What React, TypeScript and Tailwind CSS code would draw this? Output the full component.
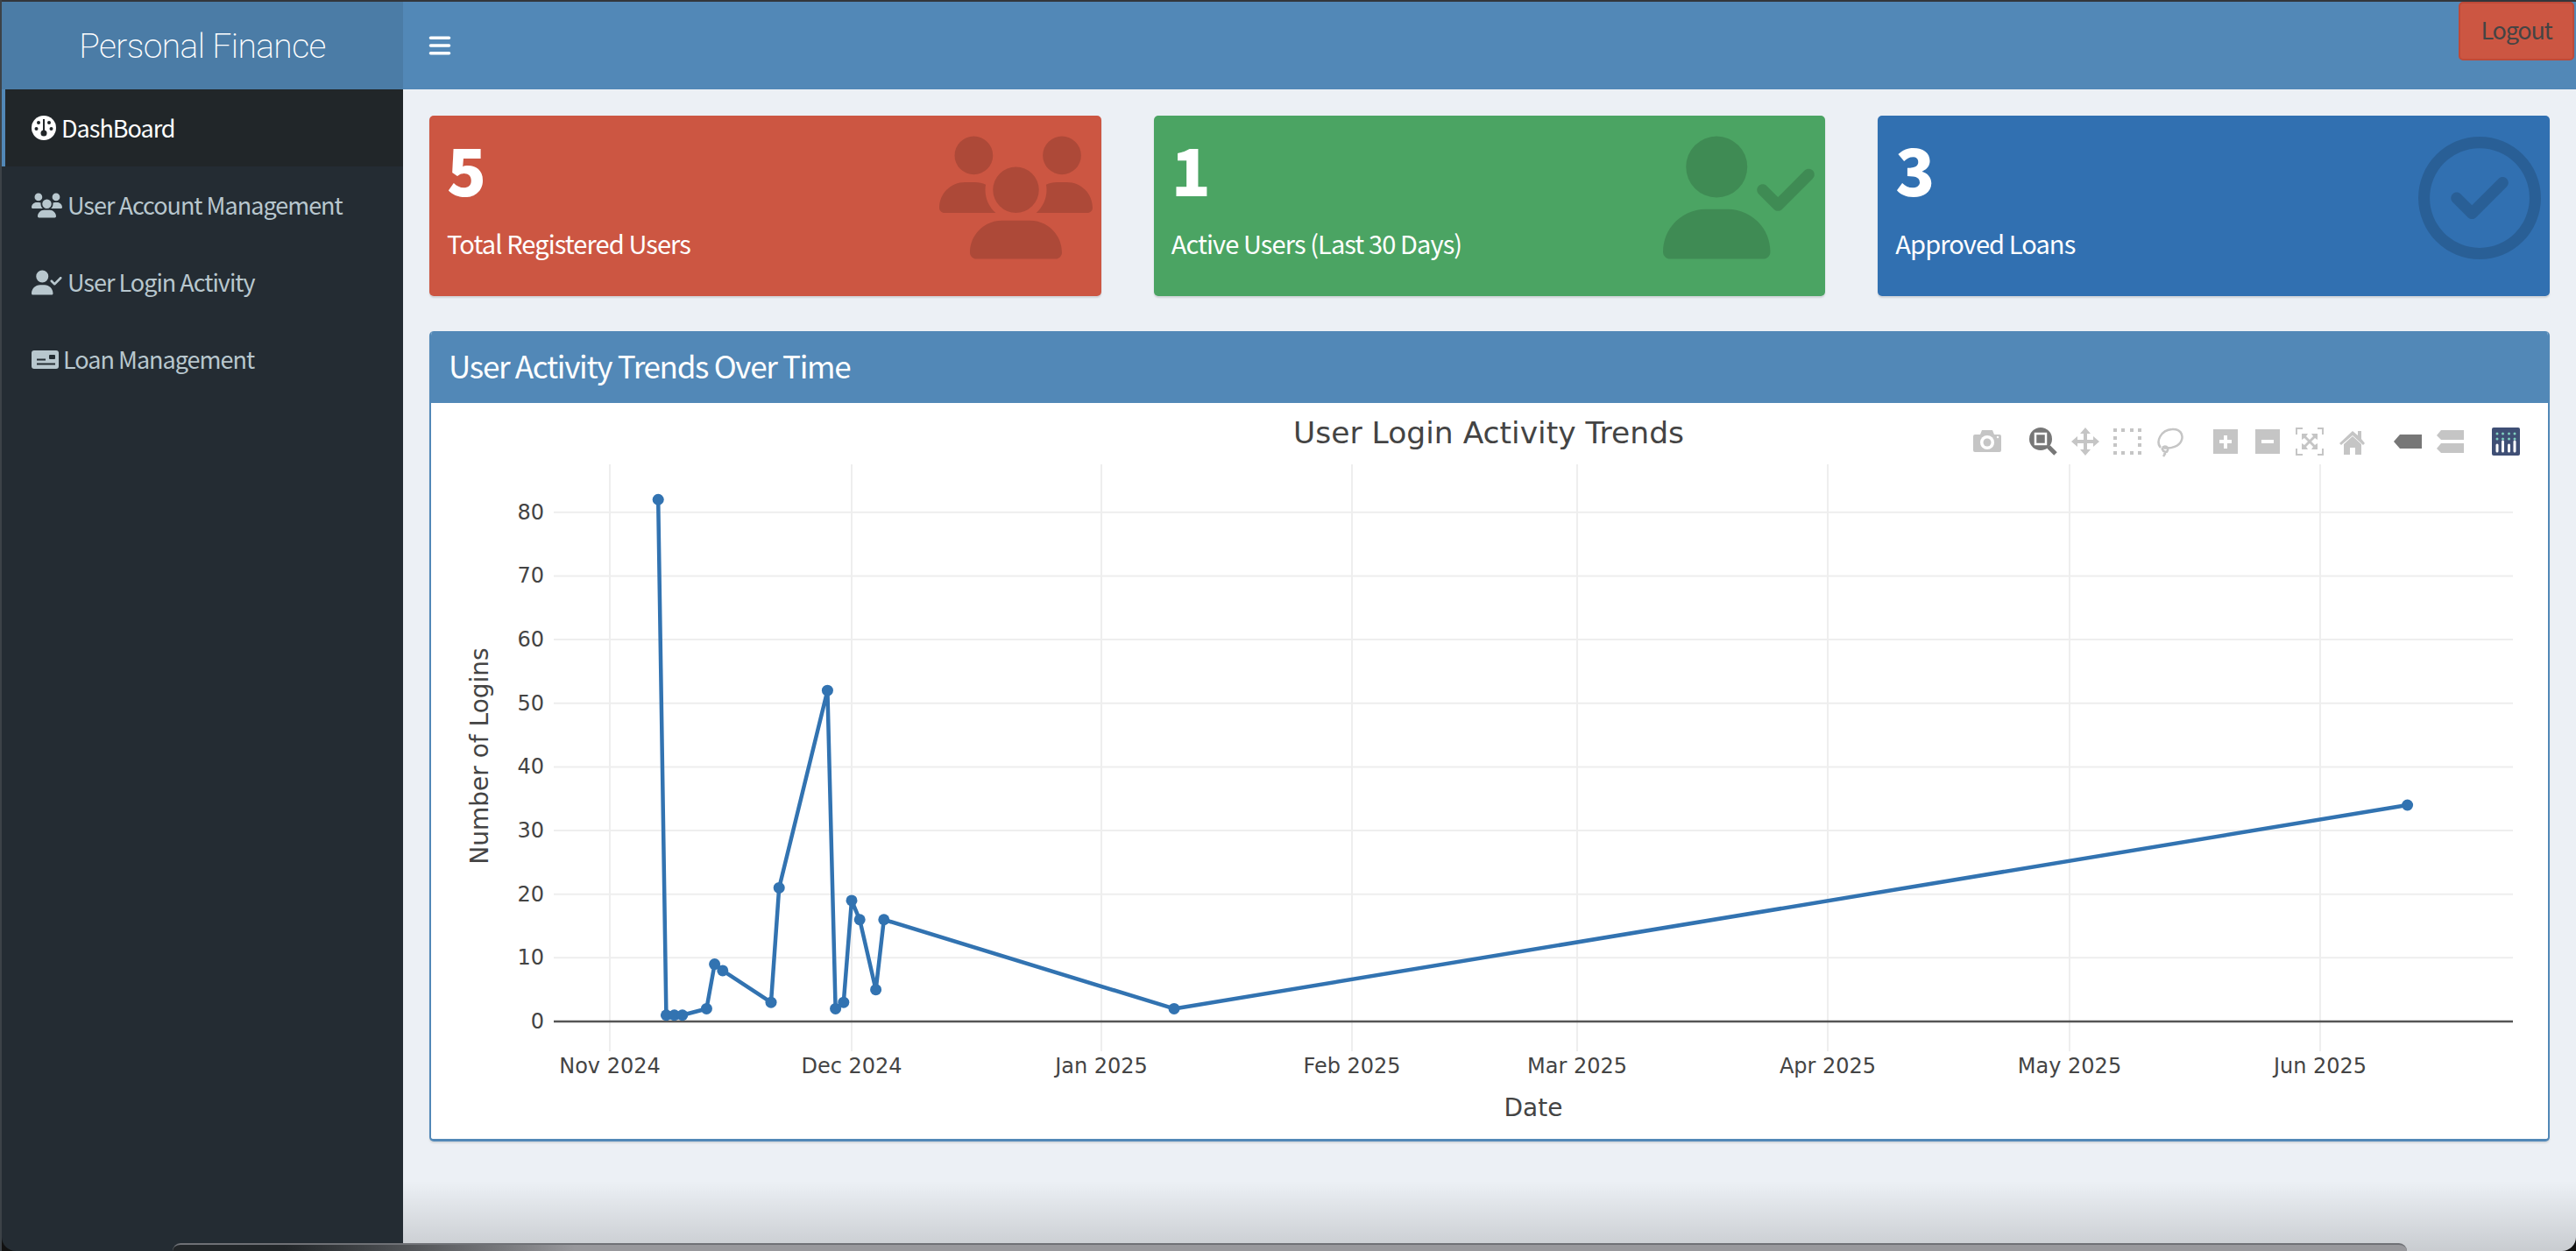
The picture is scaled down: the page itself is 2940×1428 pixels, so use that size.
import { FaBars, FaUsers, FaUserCheck, FaRegCircleCheck } from 'react-icons/fa6';

const sans = '"Noto Sans CJK SC", "Source Sans Pro", sans-serif';
const chartFont = '"DejaVu Sans", Verdana, sans-serif';

// Pixel positions of the month gridlines and the day-to-x scale
const monthTicks = [
  { x: 696, label: 'Nov 2024' },
  { x: 972, label: 'Dec 2024' },
  { x: 1257, label: 'Jan 2025' },
  { x: 1543, label: 'Feb 2025' },
  { x: 1800, label: 'Mar 2025' },
  { x: 2086, label: 'Apr 2025' },
  { x: 2362, label: 'May 2025' },
  { x: 2648, label: 'Jun 2025' },
];
const yTicks = [0, 10, 20, 30, 40, 50, 60, 70, 80];
const yPos = (v: number) => 1166 - 7.265 * v;

// [days since Nov 1 2024, logins]
const points: [number, number][] = [
  [6, 82], [7, 1], [8, 1], [9, 1], [12, 2], [13, 9], [14, 8], [20, 3], [21, 21], [27, 52],
  [28, 2], [29, 3], [30, 19], [31, 16], [33, 5], [34, 16], [70, 2], [223, 34],
];
const xPos = (d: number) => 696 + 9.2 * d;

function DashIcon() {
  return (
    <svg width="28" height="28" viewBox="0 0 28 28" className="shrink-0">
      <circle cx="14" cy="14" r="14" fill="#fff" />
      <g fill="#212629">
        <rect x="13" y="4" width="2" height="14" />
        <circle cx="14" cy="20" r="3.5" />
        <circle cx="5.5" cy="15" r="2" />
        <circle cx="8" cy="8" r="2" />
        <circle cx="20" cy="8" r="2" />
        <circle cx="22.5" cy="15" r="2" />
      </g>
    </svg>
  );
}

function LoanIcon() {
  return (
    <svg width="31" height="21" viewBox="0 0 31 21" className="shrink-0">
      <rect width="31" height="21" rx="3" fill="#b8c7ce" />
      <g fill="#242d33">
        <rect x="6" y="9.5" width="10" height="2" />
        <rect x="6" y="14.5" width="21" height="2" />
        <rect x="20" y="5" width="7" height="5" rx="1" />
      </g>
    </svg>
  );
}

function Modebar() {
  const on = '#c5c5c5';
  const dark = '#777777';
  return (
    <g>
      {/* camera */}
      <path d="M2254 496h6l2-5h12l2 5h6a2 2 0 0 1 2 2v16a2 2 0 0 1-2 2h-28a2 2 0 0 1-2-2v-16a2 2 0 0 1 2-2z" fill={on} />
      <circle cx="2268" cy="505" r="8" fill="#fff" />
      <circle cx="2268" cy="505" r="4.5" fill={on} />
      <circle cx="2280" cy="499" r="1.2" fill="#fff" />
      {/* zoom */}
      <circle cx="2329" cy="501" r="13" fill={dark} />
      <line x1="2338" y1="510" x2="2346" y2="518" stroke={dark} strokeWidth="5" />
      <rect x="2323" y="495" width="12" height="12" fill={dark} stroke="#fff" strokeWidth="2.5" />
      {/* pan */}
      <path d="M2380 488l6 7h-4v7h7v-4l7 6-7 6v-4h-7v7h4l-6 7-6-7h4v-7h-7v4l-7-6 7-6v4h7v-7h-4z" fill={on} />
      {/* box select */}
      <g fill={on}>
        {[2412, 2421, 2431, 2440].map((x) => (
          <g key={x}>
            <rect x={x} y="489" width="4" height="4" />
            <rect x={x} y="515" width="4" height="4" />
          </g>
        ))}
        <rect x="2412" y="498" width="4" height="4" />
        <rect x="2412" y="506" width="4" height="4" />
        <rect x="2440" y="498" width="4" height="4" />
        <rect x="2440" y="506" width="4" height="4" />
      </g>
      {/* lasso */}
      <g fill="none" stroke={on} strokeWidth="2.5">
        <path d="M2466 511c-6-7 0-20 13-21 9-1 13 6 11 12-2 7-12 11-22 9" />
        <path d="M2468 511c3-3 7-1 6 3-1 3-5 2-6-1-1-2 0 0 3 5l-2 3" />
      </g>
      {/* zoom in / out */}
      <rect x="2526" y="490" width="28" height="28" fill={on} />
      <path d="M2538 497h4v5h5v4h-5v6h-4v-6h-5v-4h5z" fill="#fff" />
      <rect x="2574" y="490" width="28" height="28" fill={on} />
      <rect x="2581" y="502" width="14" height="4" fill="#fff" />
      {/* autoscale */}
      <g fill="none" stroke={on} strokeWidth="2">
        <path d="M2621 496v-7h7M2645 489h6v7M2651 512v7h-6M2628 519h-7v-7" />
      </g>
      <path d="M2627 495h7l-2 3 4 4 4-4-2-3h7v7l-3-2-4 4 4 4 3-2v7h-7l2-3-4-4-4 4 2 3h-7v-7l3 2 4-4-4-4-3 2z" fill={on} />
      {/* home */}
      <path d="M2670 506l15-14 6 5v-5h4v9l4 5-2 2-12-11-13 11z" fill={on} />
      <path d="M2675 507l10-9 10 9v12h-7v-8h-6v8h-7z" fill={on} />
      {/* spike lines */}
      <path d="M2732 504l7-8h25v16h-25z" fill={dark} />
      <path d="M2786 491h26v11h-26l-5-5z" fill={on} />
      <path d="M2786 506h26v11h-26l-5-5z" fill={on} />
      {/* plotly logo */}
      <rect x="2844" y="488" width="32" height="32" rx="2" fill="#3f4f75" />
      <g fill="#80cfbe">
        {[2850, 2856.5, 2863.5, 2870].map((x) => (
          <g key={x}>
            <circle cx={x} cy="495" r="1.5" />
            <circle cx={x} cy="501" r="1.5" />
          </g>
        ))}
      </g>
      <g stroke="#fff" strokeWidth="3" strokeLinecap="round">
        <line x1="2850" y1="508" x2="2850" y2="515" />
        <line x1="2856.5" y1="504" x2="2856.5" y2="515" />
        <line x1="2863.5" y1="508" x2="2863.5" y2="515" />
        <line x1="2870" y1="504" x2="2870" y2="515" />
      </g>
    </g>
  );
}

function LoginChart() {
  const line = points.map(([d, v]) => `${xPos(d)},${yPos(v)}`).join(' ');
  return (
    <svg
      viewBox="492 460 2415 840"
      width="2415"
      height="840"
      className="block"
      style={{ fontFamily: chartFont }}
    >
      <text x="1699" y="506" textAnchor="middle" fontSize="34.5" fill="#444">User Login Activity Trends</text>
      <Modebar />
      {monthTicks.map((t) => (
        <g key={t.label}>
          <line x1={t.x} y1="530" x2={t.x} y2="1200" stroke="#eeeeee" strokeWidth="2" />
          <text x={t.x} y="1225" textAnchor="middle" fontSize="24" fill="#444">{t.label}</text>
        </g>
      ))}
      {yTicks.map((v) => (
        <g key={v}>
          {v > 0 && <line x1="632" y1={yPos(v)} x2="2868" y2={yPos(v)} stroke="#eeeeee" strokeWidth="2" />}
          <text x="621" y={yPos(v) + 8} textAnchor="end" fontSize="24" fill="#444">{v}</text>
        </g>
      ))}
      <line x1="632" y1="1166" x2="2868" y2="1166" stroke="#555" strokeWidth="2.5" />
      <polyline points={line} fill="none" stroke="#3273b1" strokeWidth="4.5" strokeLinejoin="round" />
      {points.map(([d, v]) => (
        <circle key={d} cx={xPos(d)} cy={yPos(v)} r="6.5" fill="#3273b1" />
      ))}
      <text x="1750" y="1274" textAnchor="middle" fontSize="28" fill="#444">Date</text>
      <text transform="translate(557 863) rotate(-90)" textAnchor="middle" fontSize="28" fill="#444">Number of Logins</text>
    </svg>
  );
}

function StatBox({ value, label, color, iconTop, icon }: { value: string; label: string; color: string; iconTop: string; icon: React.ReactNode }) {
  return (
    <div className={`relative h-[206px] rounded-[5px] shadow-[0_2px_2px_rgba(0,0,0,0.12)] text-white px-[20px] pt-[18px] ${color}`}>
      <div className="text-[74px] font-extrabold leading-[83px]">{value}</div>
      <div className="mt-[24px] text-[29px] leading-[40px] tracking-[-0.9px]">{label}</div>
      <div className={`absolute right-[10px] text-black/15 ${iconTop}`}>{icon}</div>
    </div>
  );
}

const navItems = [
  { label: 'User Account Management', icon: <FaUsers size={35} />, gap: 'gap-[6px]' },
  { label: 'User Login Activity', icon: <FaUserCheck size={35} />, gap: 'gap-[6px]' },
  { label: 'Loan Management', icon: <LoanIcon />, gap: 'gap-[5px]' },
];

export default function App() {
  return (
    <div
      className="relative flex h-[1428px] w-[2940px] flex-col overflow-hidden border-l-[2px] border-[#3c4247] bg-[#ecf0f5]"
      style={{ fontFamily: sans }}
    >
      <div className="h-[2px] shrink-0 bg-[#33363b]" />
      <header className="flex h-[100px] shrink-0 bg-[#5288b7]">
        <div className="flex w-[458px] shrink-0 items-center justify-center bg-[#4b7ca6] pt-[2px] text-[39px] font-extralight tracking-[-0.6px] text-white" style={{ fontFamily: 'Roboto, sans-serif' }}>
          Personal Finance
        </div>
        <div className="flex flex-1 items-start justify-between pl-[28px]">
          <FaBars size={28} className="mt-[36px] text-white" />
          <button className="mr-[2px] h-[67px] w-[132px] rounded-[5px] border-[2px] border-[#bf4a38] bg-[#cc5642] pb-[3px] text-[27px] tracking-[-1.2px] text-[#444]">
            Logout
          </button>
        </div>
      </header>
      <div className="flex flex-1">
        <aside className="w-[458px] shrink-0 bg-[#242c33] text-[27px] tracking-[-1px] text-[#b8c7ce]">
          <div className="flex h-[88px] items-center gap-[6px] border-l-[4px] border-[#5288b7] bg-[#212629] pl-[30px] text-white">
            <DashIcon />
            <span>DashBoard</span>
          </div>
          {navItems.map((item) => (
            <div key={item.label} className={`flex h-[88px] items-center pl-[34px] ${item.gap}`}>
              {item.icon}
              <span>{item.label}</span>
            </div>
          ))}
        </aside>
        <main className="flex-1 px-[30px] pt-[30px]">
          <div className="grid grid-cols-3 gap-[60px]">
            <StatBox value="5" label="Total Registered Users" color="bg-[#cc5642]" iconTop="top-[6px]" icon={<FaUsers size={175} />} />
            <StatBox value="1" label="Active Users (Last 30 Days)" color="bg-[#4ba463]" iconTop="top-[6px]" icon={<FaUserCheck size={175} />} />
            <StatBox value="3" label="Approved Loans" color="bg-[#3170b1]" iconTop="top-[24px]" icon={<FaRegCircleCheck size={140} />} />
          </div>
          <section className="mt-[40px] overflow-hidden rounded-[5px] border-x-[2px] border-b-[3px] border-[#5288b7] bg-white shadow-[0_2px_2px_rgba(0,0,0,0.1)]">
            <div className="flex h-[82px] items-center bg-[#5288b7] pb-[4px] pl-[20px] text-[35px] tracking-[-1.3px] text-white">
              User Activity Trends Over Time
            </div>
            <LoginChart />
          </section>
        </main>
      </div>
      {/* laptop bezel showing at the bottom edge of the photo */}
      <div className="pointer-events-none absolute bottom-0 left-[458px] right-0 h-[80px] bg-gradient-to-b from-transparent to-black/15" />
      <div className="absolute bottom-0 left-[195px] h-[9px] w-[2550px] rounded-t-[20px] border-t-[2px] border-[#6f7176] bg-gradient-to-r from-[#222629] from-[5%] via-[#98989c] via-[18%] to-[#98989c]" />
      <div className="absolute bottom-0 left-0 h-[16px] w-[16px] overflow-hidden">
        <div className="h-full w-full rounded-bl-[16px] shadow-[-8px_8px_0_8px_#111]" />
      </div>
      <div className="absolute bottom-0 right-0 h-[16px] w-[16px] overflow-hidden">
        <div className="h-full w-full rounded-br-[16px] shadow-[8px_8px_0_8px_#111]" />
      </div>
    </div>
  );
}
